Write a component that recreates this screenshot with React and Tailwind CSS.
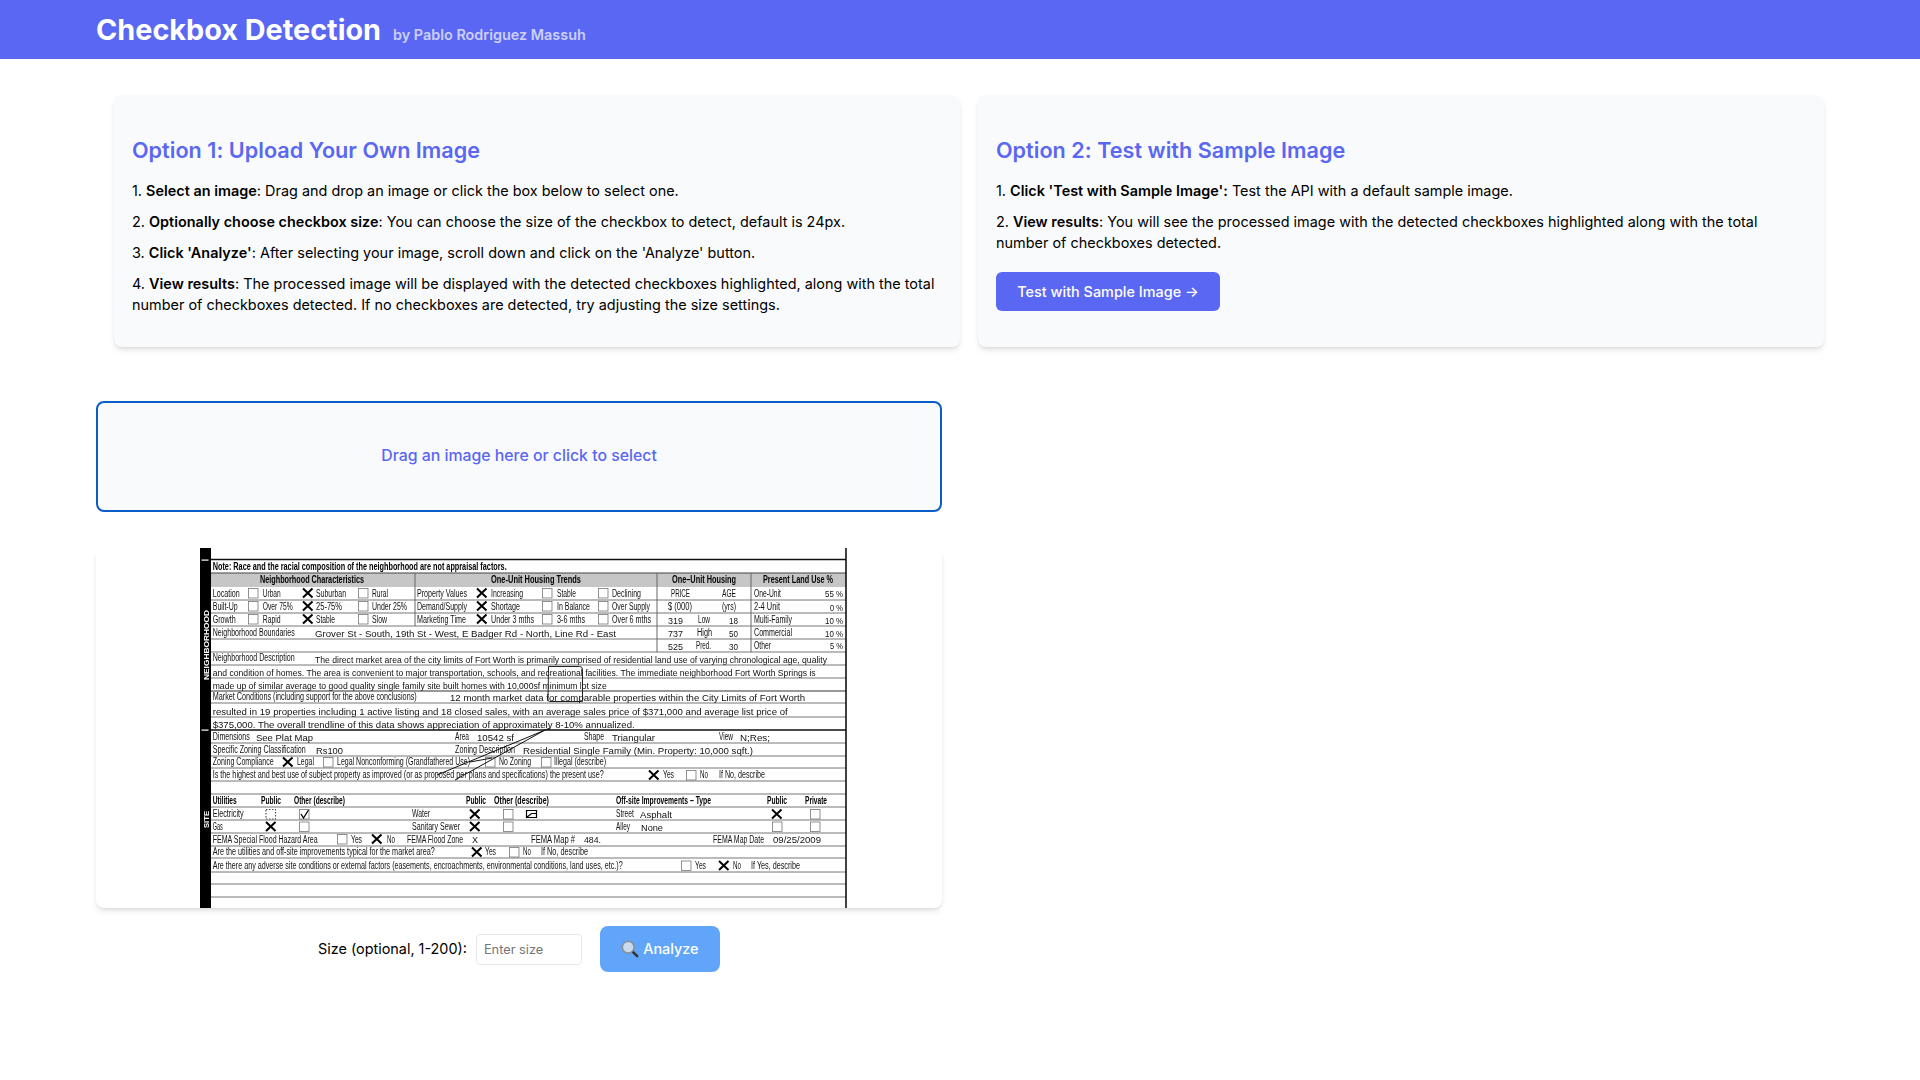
import React from 'react';

// Scanned form, drawn in image pixels: [x, baseline, width, text]
const labels = [
  [13.7, 48.5, 27, 'Location'], [63.7, 48.5, 18, 'Urban'], [117, 48.5, 30, 'Suburban'], [173, 48.5, 16, 'Rural'],
  [218, 48.5, 50, 'Property Values'], [292, 48.5, 32, 'Increasing'], [358, 48.5, 19, 'Stable'], [413, 48.5, 29, 'Declining'],
  [13.7, 62, 25, 'Built-Up'], [63.7, 62, 30, 'Over 75%'], [117, 62, 26, '25-75%'], [173, 62, 35, 'Under 25%'],
  [218, 62, 50, 'Demand/Supply'], [292, 62, 29, 'Shortage'], [358, 62, 33, 'In Balance'], [413, 62, 38, 'Over Supply'],
  [13.7, 74.5, 23, 'Growth'], [63.7, 74.5, 18, 'Rapid'], [117, 74.5, 19, 'Stable'], [173, 74.5, 15, 'Slow'],
  [218, 74.5, 49, 'Marketing Time'], [292, 74.5, 43, 'Under 3 mths'], [358, 74.5, 28, '3-6 mths'], [413, 74.5, 39, 'Over 6 mths'],
  [472, 48.5, 19, 'PRICE'], [523, 48.5, 14, 'AGE'], [555, 48.5, 27, 'One-Unit'],
  [469, 62, 24, '$ (000)'], [523, 62, 14, '(yrs)'], [555, 62, 26, '2-4 Unit'],
  [499, 74.5, 12, 'Low'], [555, 74.5, 38, 'Multi-Family'],
  [13.7, 88, 82, 'Neighborhood Boundaries'], [498, 88, 15, 'High'], [555, 88, 38, 'Commercial'],
  [497, 101, 15, 'Pred.'], [555, 101, 17, 'Other'],
  [13.7, 113, 82, 'Neighborhood Description'],
  [13.7, 152, 204, 'Market Conditions (including support for the above conclusions)'],
  [13.7, 192, 37, 'Dimensions'], [256, 192, 14, 'Area'], [385, 192, 20, 'Shape'], [520, 192, 14, 'View'],
  [13.7, 204.5, 93, 'Specific Zoning Classification'], [256, 204.5, 60, 'Zoning Description'],
  [13.7, 217, 61, 'Zoning Compliance'], [98, 217, 17, 'Legal'], [138, 217, 133, 'Legal Nonconforming (Grandfathered Use)'],
  [300, 217, 32, 'No Zoning'], [355, 217, 52, 'Illegal (describe)'],
  [13.7, 230, 391, 'Is the highest and best use of subject property as improved (or as proposed per plans and specifications) the present use?'],
  [464, 230, 11, 'Yes'], [501, 230, 8, 'No'], [520, 230, 46, 'If No, describe'],
  [13.7, 269, 31, 'Electricity'], [213, 269, 18, 'Water'], [417, 269, 18, 'Street'],
  [13.7, 282, 10, 'Gas'], [213, 282, 48, 'Sanitary Sewer'], [417, 282, 14, 'Alley'],
  [13.7, 294.5, 105, 'FEMA Special Flood Hazard Area'], [152, 294.5, 11, 'Yes'], [188, 294.5, 8, 'No'],
  [208, 294.5, 56, 'FEMA Flood Zone'], [332, 294.5, 44, 'FEMA Map #'], [514, 294.5, 51, 'FEMA Map Date'],
  [13.7, 307, 222, 'Are the utilities and off-site improvements typical for the market area?'],
  [286, 307, 11, 'Yes'], [324, 307, 8, 'No'], [342, 307, 47, 'If No, describe'],
  [13.7, 321, 410, 'Are there any adverse site conditions or external factors (easements, encroachments, environmental conditions, land uses, etc.)?'],
  [496, 321, 11, 'Yes'], [534, 321, 8, 'No'], [552, 321, 49, 'If Yes, describe'],
];

const boldLabels = [
  [13.7, 21.5, 294, 'Note: Race and the racial composition of the neighborhood are not appraisal factors.'],
  [61, 35, 104, 'Neighborhood Characteristics'], [292, 35, 90, 'One-Unit Housing Trends'],
  [473, 35, 64, 'One–Unit Housing'], [564, 35, 70, 'Present Land Use %'],
  [13.7, 256, 24, 'Utilities'], [62, 256, 20, 'Public'], [95, 256, 51, 'Other (describe)'],
  [267, 256, 20, 'Public'], [295, 256, 55, 'Other (describe)'], [417, 256, 95, 'Off-site Improvements – Type'],
  [568, 256, 20, 'Public'], [606, 256, 22, 'Private'],
];

const values = [
  [626, 49, 18, '55 %'], [631, 62.5, 13, '0 %'], [469, 76, 15, '319'], [530, 76, 9, '18'], [626, 75.5, 18, '10 %'],
  [116, 88.5, 301, 'Grover St - South, 19th St - West, E Badger Rd - North, Line Rd - East'],
  [469, 89, 15, '737'], [530, 89, 9, '50'], [626, 88.5, 18, '10 %'],
  [469, 102, 15, '525'], [530, 102, 9, '30'], [631, 101, 13, '5 %'],
  [116, 115, 512, 'The direct market area of the city limits of Fort Worth is primarily comprised of residential land use of varying chronological age, quality'],
  [13.7, 128, 603, 'and condition of homes. The area is convenient to major transportation, schools, and recreational facilities. The immediate neighborhood Fort Worth Springs is'],
  [13.7, 141, 394, 'made up of similar average to good quality single family site built homes with 10,000sf minimum lot size'],
  [251, 153, 355, '12 month market data for comparable properties within the City Limits of Fort Worth'],
  [13.7, 167, 575, 'resulted in 19 properties including 1 active listing and 18 closed sales, with an average sales price of $371,000 and average list price of'],
  [13.7, 180, 422, '$375,000. The overall trendline of this data shows appreciation of approximately 8-10% annualized.'],
  [57, 193, 57, 'See Plat Map'], [278, 193, 37, '10542 sf'], [413, 193, 43, 'Triangular'], [541, 193, 30, 'N;Res;'],
  [117, 205.5, 27, 'Rs100'], [324, 205.5, 230, 'Residential Single Family (Min. Property: 10,000 sqft.)'],
  [441, 270, 32, 'Asphalt'], [442, 282.5, 22, 'None'], [273, 295, 6, 'X'], [385, 295, 17, '484.'], [574, 295, 48, '09/25/2009'],
];

// [x, centre y]
const emptyBoxes = [
  [49, 45], [159, 45], [343, 45], [399, 45], [49, 58], [159, 58], [343, 58], [399, 58], [49, 71], [159, 71], [343, 71], [399, 71],
  [124, 214], [286, 214], [342, 214], [487, 227], [100, 278.5], [304, 266], [304, 278.5], [611, 266], [573, 278.5], [611, 278.5],
  [138, 291], [310, 304], [482, 317.5],
];
const crossBoxes = [
  [104, 45], [278, 45], [104, 58], [278, 58], [104, 71], [278, 71], [84, 214], [450, 227], [271, 266], [67, 278.5], [271, 278.5],
  [573, 266], [173, 291], [273, 304], [520, 317.5],
];

const ruleRows = [52, 65, 78, 91, 104, 117, 130, 155, 169, 195, 208, 220, 233, 246, 259, 272, 285, 298, 310, 324, 336, 349];

const ScannedForm = () => (
  <svg width="656" height="360" viewBox="-8 0 656 360" className="block font-['Liberation_Sans',sans-serif] blur-[0.3px]">
    <rect x="1" y="0" width="11" height="360" fill="#000" />
    <rect x="2.5" y="11.5" width="7" height="1.2" fill="#fff" />
    <rect x="2.5" y="181.5" width="7" height="1.2" fill="#fff" />
    <rect x="12" y="25" width="635" height="14" fill="#c6c6c6" />
    <line x1="12" y1="11.5" x2="647" y2="11.5" stroke="#111" strokeWidth="1.6" />
    <line x1="12" y1="25" x2="647" y2="25" stroke="#444" />
    <line x1="12" y1="143" x2="647" y2="143" stroke="#333" />
    <line x1="12" y1="182" x2="647" y2="182" stroke="#111" strokeWidth="1.6" />
    {ruleRows.map((y) => (
      <line key={y} x1="12" y1={y} x2="647" y2={y} stroke="#777" strokeWidth="1" />
    ))}
    <line x1="216" y1="25" x2="216" y2="78" stroke="#666" />
    <line x1="458" y1="25" x2="458" y2="104" stroke="#666" />
    <line x1="552" y1="25" x2="552" y2="104" stroke="#666" />
    <line x1="647" y1="0" x2="647" y2="360" stroke="#111" strokeWidth="1.6" />

    <text transform="translate(9.5 132) rotate(-90)" fontSize="8" fontWeight="700" fill="#fff" textLength="70" lengthAdjust="spacingAndGlyphs">NEIGHBORHOOD</text>
    <text transform="translate(9.5 280) rotate(-90)" fontSize="8" fontWeight="700" fill="#fff" textLength="17" lengthAdjust="spacingAndGlyphs">SITE</text>

    {labels.map(([x, y, w, t], i) => (
      <text key={i} x={x} y={y} fontSize="10" fill="#111" textLength={w} lengthAdjust="spacingAndGlyphs">{t}</text>
    ))}
    {boldLabels.map(([x, y, w, t], i) => (
      <text key={i} x={x} y={y} fontSize="10" fontWeight="700" fill="#000" textLength={w} lengthAdjust="spacingAndGlyphs">{t}</text>
    ))}
    {values.map(([x, y, w, t], i) => (
      <text key={i} x={x} y={y} fontSize="9.4" fill="#111" textLength={w} lengthAdjust="spacingAndGlyphs">{t}</text>
    ))}

    {emptyBoxes.map(([x, y], i) => (
      <rect key={i} x={x + 0.5} y={y - 4.5} width="9.5" height="9.5" fill="#fff" stroke="#777" strokeWidth="0.8" />
    ))}
    {crossBoxes.map(([x, y], i) => (
      <path key={i} d={`M${x} ${y - 4.5}L${x + 9.5} ${y + 4.5}M${x + 9.5} ${y - 4.5}L${x} ${y + 4.5}`} stroke="#000" strokeWidth="2" fill="none" />
    ))}

    {/* dotted box and tick on the Electricity row */}
    <rect x="67" y="261.5" width="9.5" height="9.5" fill="none" stroke="#555" strokeWidth="1.2" strokeDasharray="1.5 1.5" />
    <rect x="100.5" y="261.5" width="9.5" height="9.5" fill="#fff" stroke="#777" strokeWidth="0.8" />
    <path d="M102 266l2.5 4 5-8" stroke="#000" strokeWidth="1.3" fill="none" />
    <path d="M327.5 262.5h10v7h-10zM327.5 269.5l5-4h5" stroke="#000" strokeWidth="1.2" fill="none" />

    {/* pen marks over the scan */}
    <path d="M349.5 118.5h31q3 0 3 3v32h-33q-1.5 0-1.5-2z" stroke="#222" strokeWidth="1" fill="none" />
    <path d="M238 227L351 180M256 232L346 182M271 214L293 210" stroke="#111" strokeWidth="1" fill="none" />
  </svg>
);

const Magnifier = () => (
  <svg width="18" height="18" viewBox="0 0 20 20" className="mr-[4px] shrink-0">
    <line x1="12" y1="12" x2="18" y2="18" stroke="#333" strokeWidth="2.8" strokeLinecap="round" />
    <circle cx="8" cy="8" r="6.5" fill="#c9d9ee" stroke="#8a8f96" strokeWidth="1.6" />
  </svg>
);

export default function App() {
  return (
    <div className="min-h-screen bg-white font-['Inter',sans-serif] text-black">
      {/* Header */}
      <div className="h-[59px] bg-[#5a67f2] pl-[96px] flex items-baseline pt-[11px]">
        <h1 className="text-[28.8px] leading-[37px] font-bold text-white">Checkbox Detection</h1>
        <span className="ml-[12px] text-[14.4px] font-semibold text-white/70">by Pablo Rodriguez Massuh</span>
      </div>

      {/* Instruction cards */}
      <div className="flex gap-[18px] pl-[114px] pt-[36px]">
        <div className="w-[846px] h-[252px] bg-[#f9fafb] rounded-lg shadow-md px-[18px] pt-[41px] text-[14.4px] leading-[21.6px] tracking-[0.02px]">
          <h2 className="text-[21.6px] leading-[29px] font-semibold text-[#5a67f2] mb-[15px]">Option 1: Upload Your Own Image</h2>
          <p className="mb-[9.3px]">1. <strong className="font-semibold">Select an image</strong>: Drag and drop an image or click the box below to select one.</p>
          <p className="mb-[9.3px]">2. <strong className="font-semibold">Optionally choose checkbox size</strong>: You can choose the size of the checkbox to detect, default is 24px.</p>
          <p className="mb-[9.3px]">3. <strong className="font-semibold">Click 'Analyze'</strong>: After selecting your image, scroll down and click on the 'Analyze' button.</p>
          <p>4. <strong className="font-semibold">View results</strong>: The processed image will be displayed with the detected checkboxes highlighted, along with the total number of checkboxes detected. If no checkboxes are detected, try adjusting the size settings.</p>
        </div>
        <div className="w-[846px] h-[252px] bg-[#f9fafb] rounded-lg shadow-md px-[18px] pt-[41px] text-[14.4px] leading-[21.6px] tracking-[0.02px]">
          <h2 className="text-[21.6px] leading-[29px] font-semibold text-[#5a67f2] mb-[15px]">Option 2: Test with Sample Image</h2>
          <p className="mb-[9.3px]">1. <strong className="font-semibold">Click 'Test with Sample Image':</strong> Test the API with a default sample image.</p>
          <p className="mb-[9.3px]">2. <strong className="font-semibold">View results</strong>: You will see the processed image with the detected checkboxes highlighted along with the total number of checkboxes detected.</p>
          <button className="mt-[9px] w-[224px] h-[39px] rounded-md bg-[#5a67f2] text-white font-medium text-[14.4px]">Test with Sample Image →</button>
        </div>
      </div>

      {/* Upload column */}
      <div className="ml-[96px] w-[846px] mt-[54px]">
        <div className="h-[111px] pb-[2px] border-2 border-[#0a5cc9] rounded-lg bg-[#f9fafb] flex items-center justify-center text-[#5a67f2] font-medium text-[15.84px]">
          Drag an image here or click to select
        </div>
        <div className="mt-[36px] h-[360px] bg-white rounded-lg shadow-md flex justify-center">
          <ScannedForm />
        </div>
        <div className="mt-[18px] flex items-center justify-center gap-[18px]">
          <label className="flex items-center gap-[9px] text-[14.4px]">
            Size (optional, 1-200):
            <input placeholder="Enter size" className="w-[106px] h-[31px] px-[7px] border border-[#e5e7eb] rounded text-[12.8px] placeholder:text-[#757575]" />
          </label>
          <button className="w-[120px] h-[46px] rounded-lg bg-[#60a5fa] text-white font-medium text-[14.4px] flex items-center justify-center">
            <Magnifier />Analyze
          </button>
        </div>
      </div>
    </div>
  );
}
